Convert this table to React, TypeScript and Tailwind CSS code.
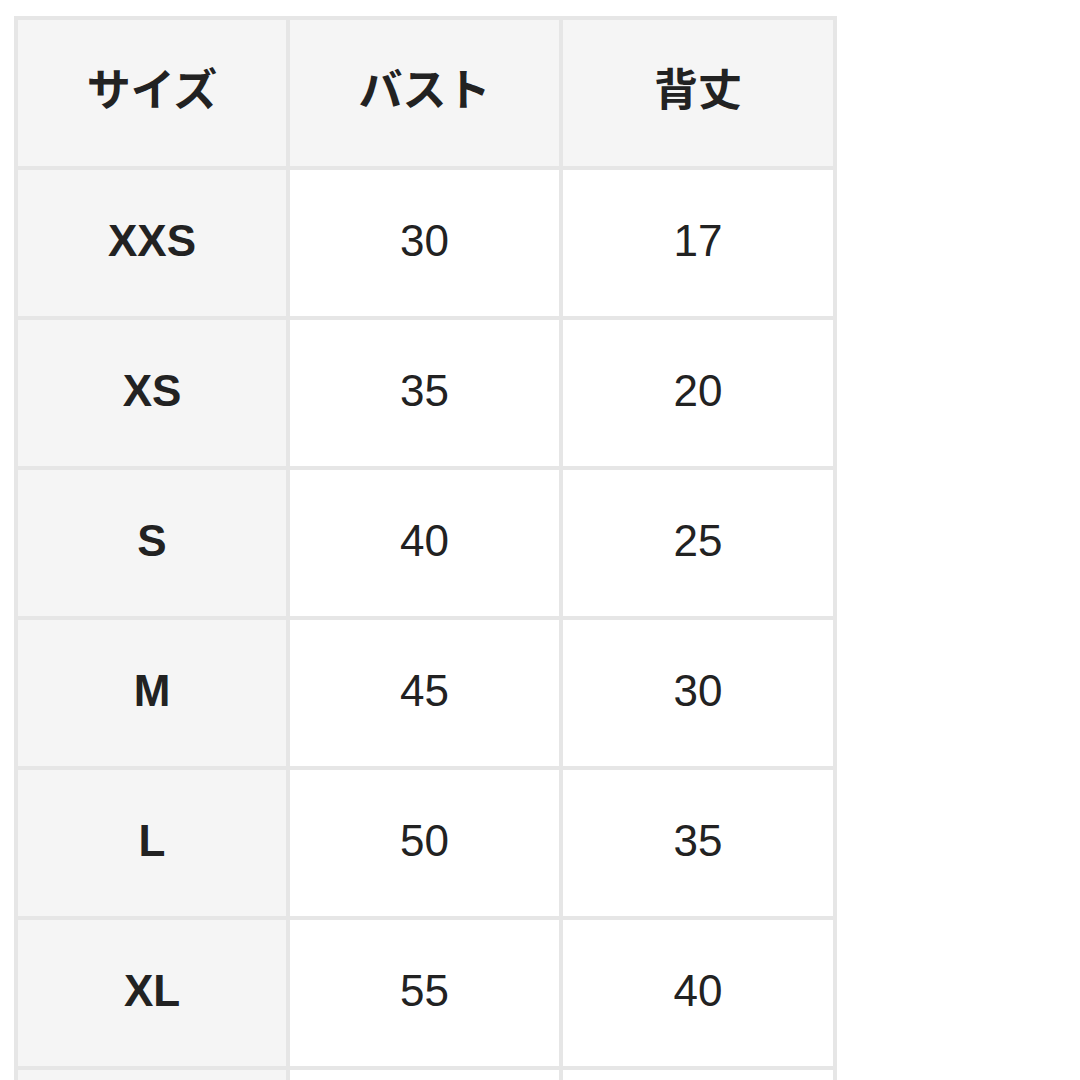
import React from "react";

const rows = [
  { size: "XXS", bust: "30", length: "17" },
  { size: "XS", bust: "35", length: "20" },
  { size: "S", bust: "40", length: "25" },
  { size: "M", bust: "45", length: "30" },
  { size: "L", bust: "50", length: "35" },
  { size: "XL", bust: "55", length: "40" },
];

export default function App() {
  return (
    <div className="w-[1080px] h-[1080px] overflow-hidden bg-white pl-[14px] pt-[16px]">
      <table className="border-separate border-spacing-[4px] bg-[#e6e6e6] text-[#222222] font-['Liberation_Sans','Noto_Sans_CJK_JP',sans-serif]">
        <thead>
          <tr>
            {["サイズ", "バスト", "背丈"].map((h, i) => (
              <th
                key={h}
                className={`h-[146px] p-0 pb-[12px] bg-[#f5f5f5] text-center align-middle text-[44px] font-bold font-['Noto_Sans_CJK_JP',sans-serif] ${
                  i === 0 ? "w-[268px]" : i === 1 ? "w-[269px]" : "w-[270px]"
                }`}
              >
                {h}
              </th>
            ))}
          </tr>
        </thead>
        <tbody>
          {rows.map(r => (
            <tr key={r.size}>
              <td className="h-[146px] p-0 pb-[4px] bg-[#f5f5f5] text-center align-middle text-[44px] font-bold">{r.size}</td>
              <td className="h-[146px] p-0 pb-[4px] bg-white text-center align-middle text-[44px]">{r.bust}</td>
              <td className="h-[146px] p-0 pb-[4px] bg-white text-center align-middle text-[44px]">{r.length}</td>
            </tr>
          ))}
          {/* next row is cut off by the bottom edge */}
          <tr>
            <td className="h-[146px] p-0 bg-[#f5f5f5]"></td>
            <td className="h-[146px] p-0 bg-white"></td>
            <td className="h-[146px] p-0 bg-white"></td>
          </tr>
        </tbody>
      </table>
    </div>
  );
}
